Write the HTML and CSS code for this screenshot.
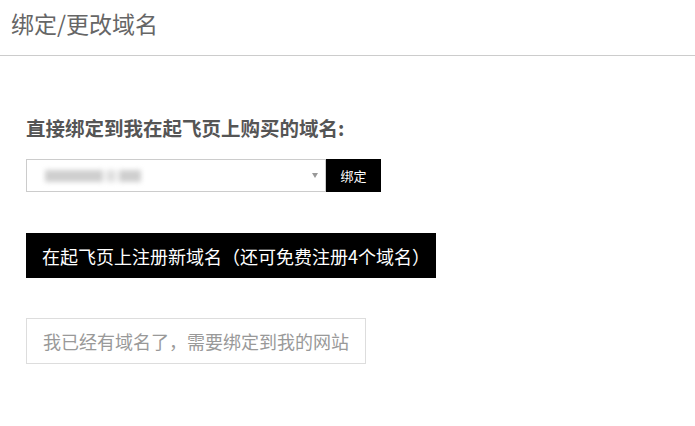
FILE: index.html
```html
<!DOCTYPE html>
<html lang="zh-CN">
  <head>
    <meta charset="UTF-8" />
    <meta name="viewport" content="width=device-width, initial-scale=1.0" />
    <title>绑定/更改域名</title>
    <link rel="stylesheet" href="styles.css">
  </head>
  <body>
    <div class="header">绑定/更改域名</div>

    <div class="content">
      <h2 class="section-title">直接绑定到我在起飞页上购买的域名:</h2>

      <div class="bind-row">
        <div class="domain-select">
          <span class="blurred">
            <i class="b1"></i><i class="b2"></i><i class="b3"></i>
          </span>
          <span class="arrow"></span>
        </div>
        <button class="bind-btn">绑定</button>
      </div>

      <button class="register-btn">在起飞页上注册新域名（还可免费注册4个域名）</button>

      <button class="own-btn">我已经有域名了，需要绑定到我的网站</button>
    </div>
  </body>
</html>
```

FILE: styles.css
```css
body {
  margin: 0;
  background-color: #fff;
  font-family: "Noto Sans CJK SC", "Liberation Sans", sans-serif;
}

.header {
  height: 55px;
  line-height: 46px;
  padding-left: 11px;
  font-size: 23px;
  color: #666;
  border-bottom: 1px solid #ccc;
}

.content {
  padding: 0 26px;
}

.section-title {
  margin: 57px 0 0;
  font-size: 19.5px;
  line-height: 30px;
  font-weight: bold;
  color: #555;
}

.bind-row {
  display: flex;
  margin-top: 16px;
  height: 33px;
}

.domain-select {
  width: 300px;
  border: 1px solid #ccc;
  display: flex;
  align-items: center;
  justify-content: space-between;
  padding: 0 6px 0 18px;
  box-sizing: border-box;
}

.blurred {
  display: flex;
  align-items: center;
  gap: 3px;
  filter: blur(2.5px);
}

.blurred i {
  display: block;
  height: 12px;
  background-color: #cfcfcf;
}

.blurred .b1 {
  width: 58px;
}

.blurred .b2 {
  width: 10px;
  background-color: #e0e0e0;
}

.blurred .b3 {
  width: 22px;
}

.arrow {
  width: 0;
  height: 0;
  border-left: 3px solid transparent;
  border-right: 3px solid transparent;
  border-top: 5px solid #999;
  margin-right: 1px;
}

.bind-btn {
  width: 55px;
  border: none;
  background-color: #000;
  color: #fff;
  font-family: inherit;
  font-size: 13px;
  padding: 0;
  cursor: pointer;
}

.register-btn,
.own-btn {
  display: block;
  font-family: inherit;
  font-size: 18px;
  cursor: pointer;
  padding: 0 16px;
  text-align: left;
  white-space: nowrap;
}

.register-btn {
  margin-top: 41px;
  height: 45px;
  width: 410px;
  border: none;
  background-color: #000;
  color: #fff;
}

.own-btn {
  margin-top: 40px;
  height: 46px;
  width: 340px;
  border: 1px solid #ddd;
  background-color: #fff;
  color: #999;
}
```
